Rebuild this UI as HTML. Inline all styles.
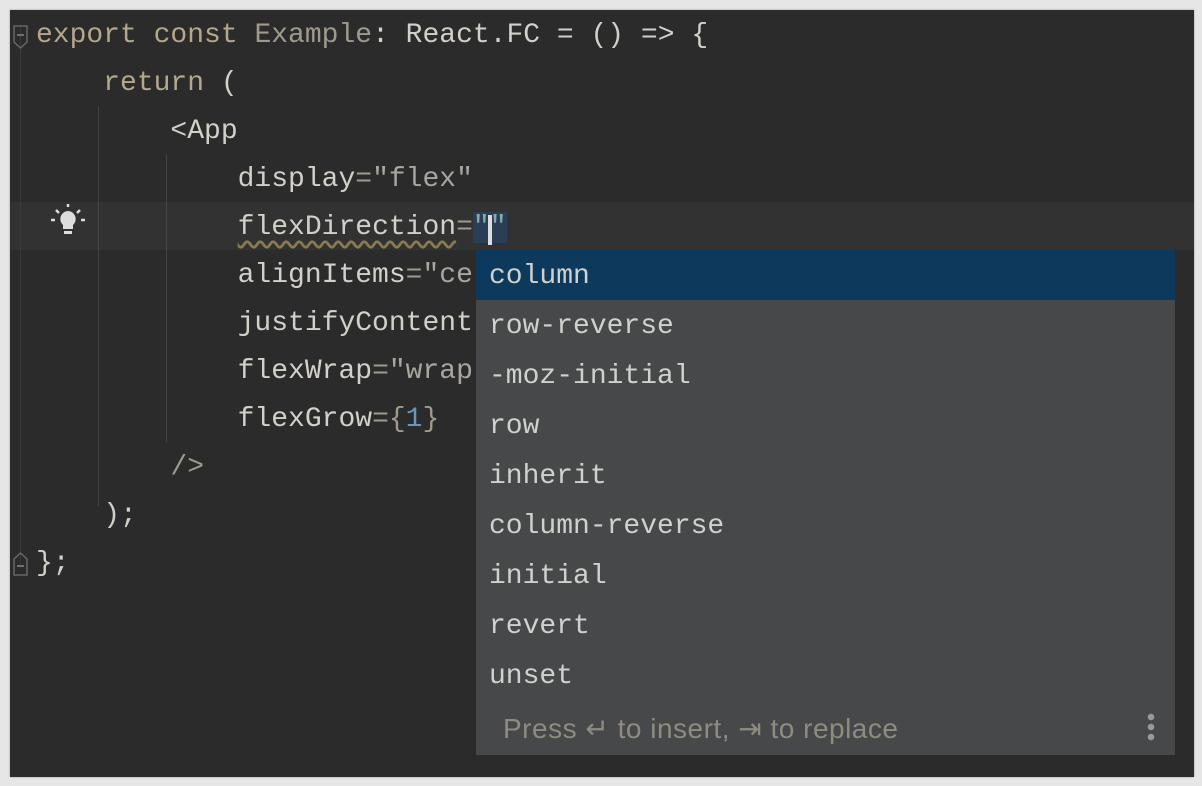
<!DOCTYPE html>
<html><head><meta charset="utf-8"><style>
html,body{margin:0;padding:0;width:1202px;height:786px;background:#e6e6e6;overflow:hidden}
#ed{position:absolute;left:10px;top:10px;width:1184px;height:767px;background:#2b2b2b;box-shadow:0 0 2px #999}
.mono{font-family:"Liberation Mono",monospace;font-size:28px}
.ln{position:absolute;left:26px;height:48px;line-height:52px;white-space:pre;color:#d2d0c8}
.k{color:#b4a88c}.g{color:#a09a8c}.s{color:#a8a69e}.n{color:#6897bb}.p{color:#c8c6be}
.guide{position:absolute;width:1px;background:#444}
#pop{position:absolute;left:466px;top:240px;width:699px;height:505px;background:#46484a}
.it{height:50px;line-height:53px;padding-left:13px;color:#d0d0cc;white-space:pre}
.sel{background:#0d3a5c}
#ft{position:absolute;left:0;top:450px;width:699px;height:55px;line-height:57px;font-family:"Liberation Sans",sans-serif;font-size:28px;letter-spacing:0.5px;color:#8e8b80;padding-left:27px;box-sizing:border-box}
</style></head><body>
<div id="ed" class="mono">
<div style="position:absolute;left:0;top:192px;width:1184px;height:48px;background:#323232"></div>
<div class="guide" style="left:10px;top:16px;height:540px;background:#3a3a3a"></div>
<div class="guide" style="left:88px;top:96px;height:400px"></div>
<div class="guide" style="left:156px;top:144px;height:288px"></div>
<svg style="position:absolute;left:2px;top:15px" width="18" height="26"><path d="M2 1h13v16l-6.5 6-6.5-6z" fill="none" stroke="#666" stroke-width="1.5"/><path d="M5 10h7" stroke="#888" stroke-width="1.5"/></svg>
<svg style="position:absolute;left:2px;top:540px" width="18" height="26"><path d="M2 25h13V9L8.5 3 2 9z" fill="none" stroke="#666" stroke-width="1.5"/><path d="M5 16h7" stroke="#888" stroke-width="1.5"/></svg>
<div class="ln" style="top:0"><span class="k">export const </span><span class="g">Example</span>: React.FC = () =&gt; {</div>
<div class="ln" style="top:48px">    <span class="k">return</span> (</div>
<div class="ln" style="top:96px">        &lt;App</div>
<div class="ln" style="top:144px">            display<span class="g">=</span><span class="s">"flex"</span></div>
<div class="ln" style="top:192px">            <span style="text-decoration:underline wavy #8a7a50;text-underline-offset:6px">flexDirection</span><span class="g">=</span><span style="background:#2a3f55;color:#8aa">""</span></div>
<div class="ln" style="top:240px">            alignItems<span class="g">=</span><span class="s">"ce</span></div>
<div class="ln" style="top:288px">            justifyContent</div>
<div class="ln" style="top:336px">            flexWrap<span class="g">=</span><span class="s">"wrap</span></div>
<div class="ln" style="top:384px">            flexGrow<span class="g">={</span><span class="n">1</span><span class="g">}</span></div>
<div class="ln" style="top:432px">        <span class="g">/&gt;</span></div>
<div class="ln" style="top:480px">    );</div>
<div class="ln" style="top:528px">};</div>
<div style="position:absolute;left:478px;top:205px;width:4px;height:30px;background:#ddd"></div>
<svg style="position:absolute;left:38px;top:192px" width="40" height="40"><g stroke="#ddd" stroke-width="2.5"><path d="M3 18h4M33 18h4M8 8l3 3M32 8l-3 3M20 2v3"/></g><path d="M20 9a8 8 0 0 0-5 14v4h10v-4a8 8 0 0 0-5-14z" fill="#ddd"/><rect x="16" y="29" width="8" height="3" fill="#ddd"/></svg>
<div id="pop">
<div class="it sel">column</div>
<div class="it">row-reverse</div>
<div class="it">-moz-initial</div>
<div class="it">row</div>
<div class="it">inherit</div>
<div class="it">column-reverse</div>
<div class="it">initial</div>
<div class="it">revert</div>
<div class="it">unset</div>
<div id="ft">Press ↵ to insert, ⇥ to replace<span style="position:absolute;right:20px;top:12px;width:8px;height:30px;background:radial-gradient(circle,#999 3px,transparent 3.5px) 0 0/8px 10px"></span></div>
</div>
</div>
</body></html>
